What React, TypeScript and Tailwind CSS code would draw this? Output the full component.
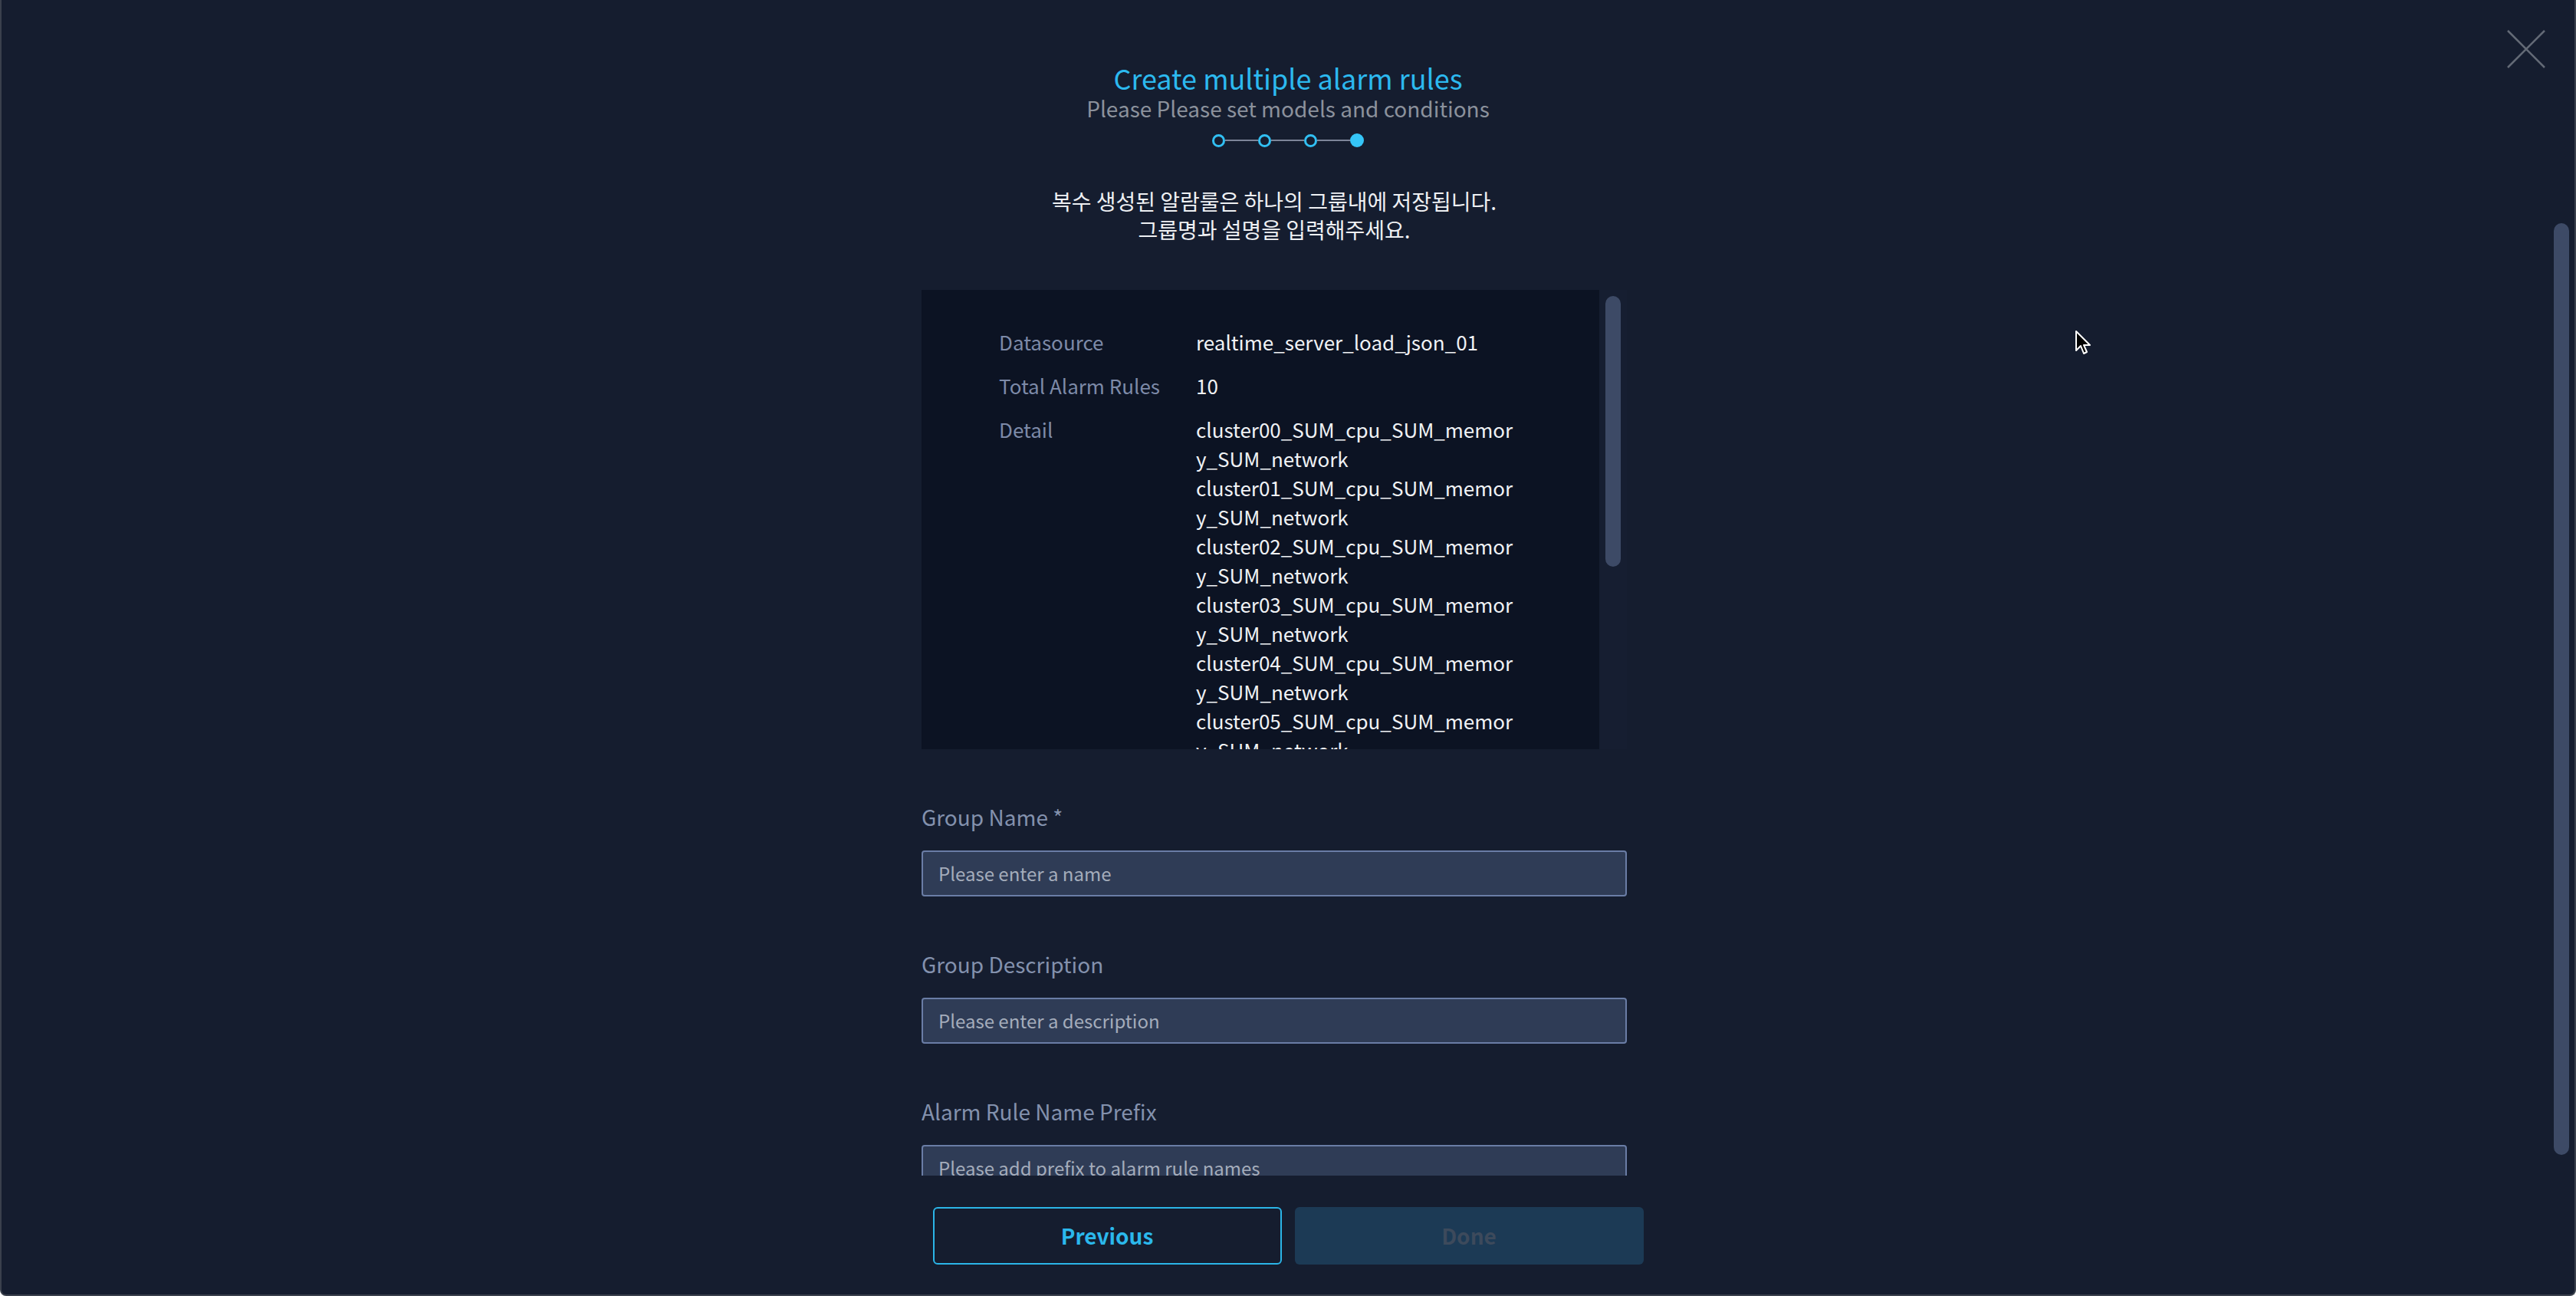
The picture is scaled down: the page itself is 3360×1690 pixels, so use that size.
import React from "react";

const details = Array.from(
  { length: 10 },
  (_, i) => `cluster0${i}_SUM_cpu_SUM_memory_SUM_network`,
);

const fields = [
  { label: "Group Name *", placeholder: "Please enter a name" },
  { label: "Group Description", placeholder: "Please enter a description" },
  { label: "Alarm Rule Name Prefix", placeholder: "Please add prefix to alarm rule names" },
];

const Stepper = () => (
  <div className="mt-[13px] flex h-[18px] items-center">
    {[0, 1, 2].map((i) => (
      <React.Fragment key={i}>
        <div className="h-[17px] w-[17px] rounded-full border-[3px] border-[#31bff2]" />
        <div className="h-[2px] w-[43px] bg-[#7d8599]" />
      </React.Fragment>
    ))}
    <div className="h-[18px] w-[18px] rounded-full bg-[#35c5f7]" />
  </div>
);

export default function App() {
  return (
    <div className="relative h-[1690px] w-full overflow-hidden rounded-b-[8px] border-x-2 border-b-2 border-[#3a404c] bg-[#151d2f] font-['Noto_Sans_CJK_KR','Noto_Sans',sans-serif]">
      <div className="flex flex-col items-center">
        {/* Header */}
        <h1 className="pt-[81px] text-[36px] leading-[40px] text-[#2cb9ef]">
          Create multiple alarm rules
        </h1>
        <p className="text-[28px] leading-[40px] text-[#8b919c]">
          Please Please set models and conditions
        </p>
        <Stepper />

        {/* Scroll body */}
        <div className="flex h-[1341px] w-[956px] flex-col overflow-hidden">
          <p className="mt-[52px] w-[920px] text-center text-[28px] leading-[37px] text-[#eef0f3]">
            복수 생성된 알람룰은 하나의 그룹내에 저장됩니다.
            <br />
            그룹명과 설명을 입력해주세요.
          </p>

          <div className="mt-[60px] flex h-[599px] shrink-0">
            <div className="w-[884px] overflow-hidden bg-[#0c1323] pl-[101px] pt-[49px]">
              <div className="grid grid-cols-[257px_420px] gap-y-[19px] text-[26px] leading-[38px]">
                <span className="text-[#7d8aa8]">Datasource</span>
                <span className="text-[#f0f2f5]">realtime_server_load_json_01</span>
                <span className="text-[#7d8aa8]">Total Alarm Rules</span>
                <span className="text-[#f0f2f5]">10</span>
                <span className="text-[#7d8aa8]">Detail</span>
                <div className="flex flex-col break-all text-[#f0f2f5]">
                  {details.map((d) => (
                    <span key={d}>{d}</span>
                  ))}
                </div>
              </div>
            </div>
            <div className="w-[36px] bg-[#161e31] pl-[8px] pt-[8px]">
              <div className="h-[353px] w-[20px] rounded-full bg-[#3d4a66]" />
            </div>
          </div>

          {fields.map((f) => (
            <div key={f.label} className="mt-[69px]">
              <label className="block text-[28px] leading-[38px] text-[#8391ad]">
                {f.label}
              </label>
              <input
                placeholder={f.placeholder}
                className="mt-[25px] h-[60px] w-[920px] rounded-[4px] border-2 border-[#6a7da6] bg-[#2f3c56] px-[20px] pb-[2px] text-[24px] text-[#e5e7eb] outline-none placeholder:text-[#a4acbb]"
              />
            </div>
          ))}
        </div>

        {/* Footer */}
        <div className="flex gap-[17px] pt-[41px]">
          <button className="h-[75px] w-[455px] rounded-[6px] border-2 border-[#2bb5e8] pb-[2px] text-[28px] font-bold text-[#2bb8ec]">
            Previous
          </button>
          <button className="h-[75px] w-[455px] rounded-[6px] bg-[#1c3a55] pb-[2px] text-[28px] font-bold text-[#3d4a5c]">
            Done
          </button>
        </div>
      </div>

      {/* close */}
      <button className="absolute right-[37px] top-[38px] h-[52px] w-[52px] text-[#636a76]">
        <svg viewBox="0 0 52 52" className="h-full w-full" fill="none" stroke="currentColor" strokeWidth="2.5">
          <path d="M2 2 L50 50 M50 2 L2 50" />
        </svg>
      </button>

      {/* page scrollbar */}
      <div className="absolute right-[7px] top-[291px] h-[1215px] w-[20px] rounded-full bg-[#3d4a66]" />

      {/* pointer */}
      <svg className="absolute left-[2704px] top-[430px]" width="24" height="36" viewBox="0 0 24 36">
        <path d="M2 2 L2 27 L8 21 L12 31 L16 29 L12 20 L20 20 Z" fill="#000" stroke="#fff" strokeWidth="2" strokeLinejoin="round" />
      </svg>
    </div>
  );
}
